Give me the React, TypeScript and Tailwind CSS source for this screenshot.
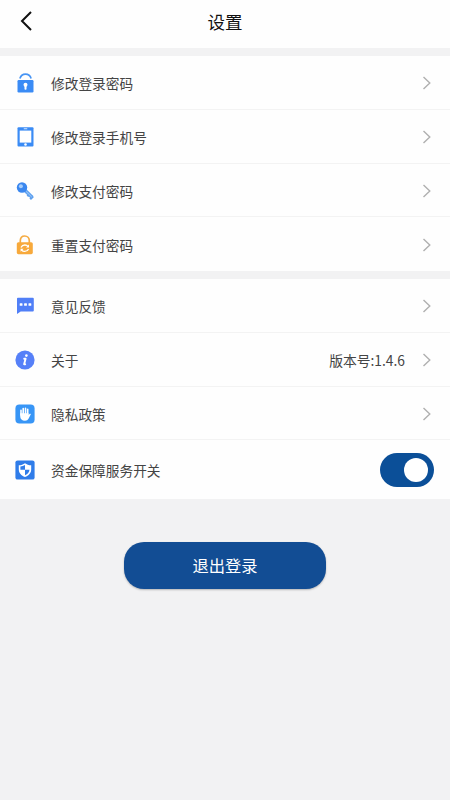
import { useState } from "react";
import type { ReactNode } from "react";

const LockIcon = () => (
  <svg width="18" height="20" viewBox="-0.7 0 18 20">
    <path d="M3.2 5.6C4 2.9 6.3 1.2 8.8 1.2s4.8 1.5 5.6 4.2" fill="none" stroke="#4794f4" strokeWidth="1.7" />
    <rect x="0.8" y="7" width="16" height="12.4" rx="1.2" fill="#3a8bf5" />
    <circle cx="8.8" cy="11.7" r="2" fill="#fff" />
    <rect x="7.8" y="12.5" width="2" height="4.2" rx="0.8" fill="#fff" />
  </svg>
);

const TabletIcon = () => (
  <svg width="18" height="20" viewBox="-0.7 0 18 20">
    <rect x="0.8" y="0.3" width="16" height="19.2" rx="1" fill="#3a8bf5" />
    <rect x="3" y="3.6" width="11.6" height="12" fill="#fff" />
    <rect x="6.9" y="1.3" width="3.8" height="1" rx="0.5" fill="#d5e6fd" />
    <circle cx="8.8" cy="17.5" r="1.3" fill="#fff" />
  </svg>
);

const KeyIcon = () => (
  <svg width="18" height="18" viewBox="-0.4 0 18 18">
    <path d="M8.5 8.2 15.9 15.6" stroke="#62a3f0" strokeWidth="3.6" fill="none" />
    <path d="M11 14.3l2-2M13.8 17.2l2.8-2.8" stroke="#5d9fee" strokeWidth="2.2" fill="none" />
    <path d="M9.8 9.5l5.6 5.6" stroke="#a9cdf8" strokeWidth="0.9" fill="none" />
    <circle cx="5.6" cy="5.5" r="5.2" fill="#3a87ef" />
    <circle cx="4.5" cy="4.3" r="2" fill="#a6cdfb" />
  </svg>
);

const ResetLockIcon = () => (
  <svg width="18" height="20" viewBox="-0.5 0 18 20">
    <path d="M3.8 8V5.8C3.8 2.8 5.8 1 8.3 1s4.5 1.8 4.5 4.8V8" fill="none" stroke="#f5ab42" strokeWidth="1.7" />
    <rect x="0.3" y="7.2" width="16" height="12" rx="1.6" fill="#f7a93b" />
    <path d="M4.5 12.4c.7-1.5 2.2-2.4 3.9-2.4 1.4 0 2.5.6 3.3 1.6M12.1 14c-.7 1.5-2.2 2.4-3.9 2.4-1.4 0-2.5-.6-3.3-1.6" fill="none" stroke="#fff" strokeWidth="1.3" />
    <path d="M12.5 9.6v3h-3zM4.1 16.8v-3h3z" fill="#fff" />
  </svg>
);

const MessageIcon = () => (
  <svg width="18" height="18" viewBox="-0.7 0 18 18">
    <path d="M1.2 0.8h14.9a1 1 0 0 1 1 1V13.6a1 1 0 0 1-1 1H4L.3 17V1.8a1 1 0 0 1 .9-1z" fill="#507ff7" />
    <rect x="3" y="6.2" width="2.8" height="2.6" rx="0.6" fill="#fff" />
    <rect x="7.4" y="6.2" width="2.8" height="2.6" rx="0.6" fill="#fff" />
    <rect x="11.8" y="6.2" width="2.8" height="2.6" rx="0.6" fill="#fff" />
  </svg>
);

const InfoIcon = () => (
  <svg width="20" height="20" viewBox="0 0 20 20">
    <circle cx="10" cy="10" r="9.6" fill="#5680f8" />
    <circle cx="11.4" cy="5.6" r="1.3" fill="#fff" />
    <path d="M9.2 8.7H10.6L9.1 14.2H10.2" fill="none" stroke="#fff" strokeWidth="1.9" strokeLinejoin="round" strokeLinecap="round" />
  </svg>
);

const HandIcon = () => (
  <svg width="20" height="20" viewBox="0 0 20 20">
    <rect x="0.4" y="0.4" width="19.2" height="19.2" rx="4" fill="#3795f6" />
    <path d="M6 11V6.2M8.2 10V4.6M10.5 10V4.2M12.7 10.5V5.4" stroke="#fff" strokeWidth="1.6" strokeLinecap="round" />
    <path d="M5.2 9.2h8.3v1.9c.5-.9 1.2-1.6 1.9-1.4.5.2.4.7.2 1.1l-2.1 4c-.7 1.3-1.8 2-3.5 2-2.9 0-4.8-1.7-4.8-4.5z" fill="#fff" />
  </svg>
);

const ShieldIcon = () => (
  <svg width="20" height="20" viewBox="0 0 20 20">
    <rect x="0.4" y="0.4" width="19.2" height="19.2" rx="2.2" fill="#2f7ce9" />
    <path d="M10 3.2c1.8 1.3 3.8 2 6.2 2.1v4.1c0 3.7-2.5 6-6.2 7.6-3.7-1.6-6.2-3.9-6.2-7.6V5.3C6.2 5.2 8.2 4.5 10 3.2z" fill="#fff" />
    <path d="M10 5.1v4.7H5.4V6.5C7.1 6.3 8.6 5.8 10 5.1zM10 9.8h4.5c-.2 2.6-1.8 4.3-4.5 5.5z" fill="#2f7ce9" />
  </svg>
);

const Chevron = () => (
  <svg width="10" height="14" viewBox="0 0 10 14" fill="none" stroke="#b0b0b0" strokeWidth="1.4">
    <path d="M1.5 0.9 7.8 7 1.5 13.1" />
  </svg>
);

type RowProps = {
  icon: ReactNode;
  label: string;
  value?: string;
};

function Row({ icon, label, value }: RowProps) {
  return (
    <div className="flex h-[53.75px] items-center border-b border-[#f3f3f3] pt-[2px] pr-[18px] pl-[15px] last:border-b-0">
      <span className="flex w-5 justify-center">{icon}</span>
      <span className="ml-4 flex-1">{label}</span>
      {value && <span className="mr-[17px] text-[13.8px]">{value}</span>}
      <Chevron />
    </div>
  );
}

export default function App() {
  const [enabled, setEnabled] = useState(true);

  return (
    <div className="min-h-screen bg-[#f2f2f3] font-['Noto_Sans_CJK_SC','Noto_Sans',sans-serif] text-[13.7px] text-[#444]">
      <header className="grid h-12 grid-cols-[1fr_auto_1fr] items-center bg-[#fefefe]">
        <button className="ml-5 w-4" aria-label="返回">
          <svg className="mt-[-6px]" width="13" height="20" viewBox="0 0 13 20" fill="none" stroke="#111" strokeWidth="2">
            <path d="M11 1 2 10l9 9" />
          </svg>
        </button>
        <h1 className="mt-[-3px] text-[17.5px] text-[#111]">设置</h1>
      </header>

      <section className="mt-2 bg-[#fefefe]">
        <Row icon={<LockIcon />} label="修改登录密码" />
        <Row icon={<TabletIcon />} label="修改登录手机号" />
        <Row icon={<KeyIcon />} label="修改支付密码" />
        <Row icon={<ResetLockIcon />} label="重置支付密码" />
      </section>

      <section className="mt-2 bg-[#fefefe]">
        <Row icon={<MessageIcon />} label="意见反馈" />
        <Row icon={<InfoIcon />} label="关于" value="版本号:1.4.6" />
        <Row icon={<HandIcon />} label="隐私政策" />
        <div className="flex h-[58.5px] items-center pr-4 pl-[15px]">
          <ShieldIcon />
          <span className="mt-[2px] ml-4 flex-1">资金保障服务开关</span>
          <button
            role="switch"
            aria-checked={enabled}
            onClick={() => setEnabled(!enabled)}
            className={`flex h-[34px] w-[54px] items-center rounded-full px-[6px] ${
              enabled ? "justify-end bg-[#0b4f98]" : "justify-start bg-gray-300"
            }`}
          >
            <span className="size-6 rounded-full bg-white" />
          </button>
        </div>
      </section>

      <button className="mx-auto mt-[43px] flex h-[47px] w-[202px] items-center justify-center rounded-[20px] bg-[#124d94] text-[16.3px] text-white shadow-[0_1px_2px_rgba(0,0,0,0.25)]">
        退出登录
      </button>
    </div>
  );
}
